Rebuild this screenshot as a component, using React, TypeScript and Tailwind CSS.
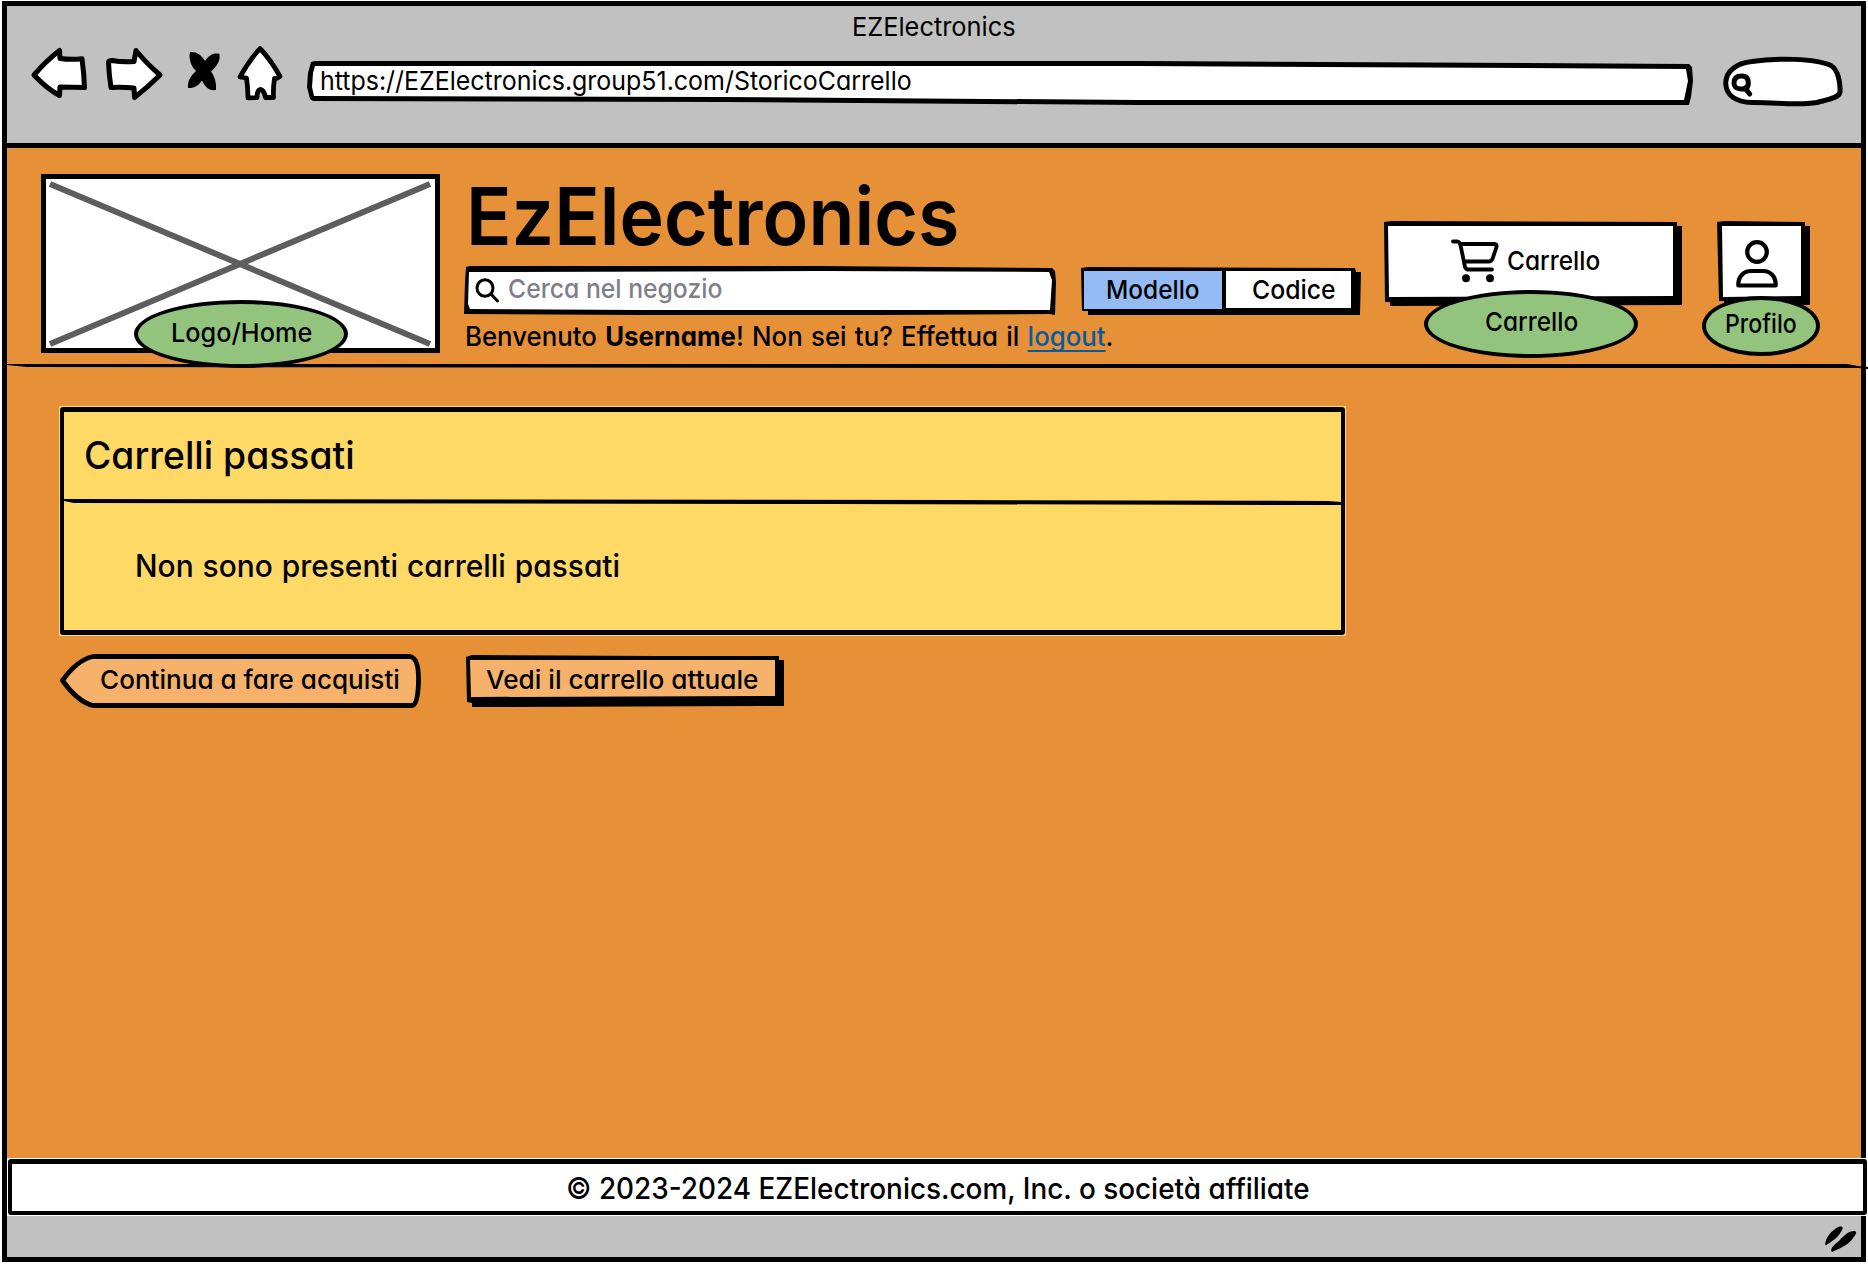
import { useLayoutEffect, useRef, useState } from "react";
import type { ReactNode } from "react";

/** One line of hand-lettered text, condensed or widened to fill its own width. */
function Line({ className, children }: { className: string; children: ReactNode }) {
  const box = useRef<HTMLSpanElement>(null);
  const text = useRef<HTMLSpanElement>(null);
  const [scale, setScale] = useState(1);
  useLayoutEffect(() => {
    if (box.current && text.current) {
      setScale(box.current.clientWidth / text.current.offsetWidth);
    }
  }, []);
  return (
    <span ref={box} className={`block shrink-0 ${className}`}>
      <span
        ref={text}
        className="inline-block origin-left whitespace-nowrap align-top"
        style={{ transform: `scaleX(${scale})` }}
      >
        {children}
      </span>
    </span>
  );
}

const ink = {
  fill: "white",
  stroke: "black",
  strokeWidth: 5,
  strokeLinejoin: "round" as const,
  strokeLinecap: "round" as const,
};

function BackIcon() {
  return (
    <svg className="h-[60px] w-[60px] shrink-0" viewBox="30 44 60 60" {...ink}>
      <path d="M34 75 Q46 61 59.500 50.500 L60 58.500 Q71 60 82 58.800 Q84 73 84.500 87.500 Q72 87 60 87 L59.500 95.500 Q46 88 34 75Z" />
    </svg>
  );
}

function ForwardIcon() {
  return (
    <svg className="h-[60px] w-[62px] shrink-0" viewBox="103 44 62 60" {...ink}>
      <path d="M108.500 62 Q109 60.500 112 60.500 Q123 62.500 134 61.500 Q135 56 136 50.500 Q146 63 160 75 Q148 87 134.500 97.500 L134 88 Q122 87 111 87.500 Q109 75 108.500 62Z" />
    </svg>
  );
}

function StopIcon() {
  return (
    <svg className="h-[60px] w-[38px] shrink-0" viewBox="185 44 38 60">
      <path d="M190 52 C197 51.500 201.500 55 205 61 C209 55 214 52.500 219.500 54 C220.500 61 217 66 211 71.500 C215 77 216.500 83 216 90 C209 91 205 87 202 80.500 C198.500 85.500 194 88.500 188 88 C187.500 81 190.500 76 196 71 C191 66 188.500 59 190 52Z" />
    </svg>
  );
}

function HomeIcon() {
  return (
    <svg className="h-[60px] w-[49px] shrink-0" viewBox="236 44 49 60" {...ink} strokeWidth={4.8}>
      <path d="M260 48.500 Q271 60 280 76.500 Q277 79 274.500 78.500 Q273 88 273.500 97.500 L265.500 97.500 Q264 90 260.500 89.500 Q257 90 257 97.500 L248 97.800 Q248 88 246.500 78 L240 77 Q248 62 260 48.500Z" />
    </svg>
  );
}

function BrowserSearch() {
  return (
    <svg className="ml-[27px] h-[66px] w-[123px] shrink-0" viewBox="1721 44 123 66" {...ink}>
      <path d="M1725.700 83 C1726 70 1738 63 1752 61.500 C1775 58 1815 58 1831 65.500 C1838 70 1840.500 82 1840 92 C1839 98 1828 99.500 1817 102.500 C1795 106 1775 102 1752 102.500 C1735 102 1726 95 1725.700 83Z" />
      <path fill="none" d="M1734 83 C1734 77 1738 76 1741.500 76 C1747 76 1748.500 79 1748.300 84 C1747.500 89 1745 89 1741 89 C1736 88.500 1734 87 1734 83Z M1745 88 L1749.700 94" />
    </svg>
  );
}

function CartIcon() {
  return (
    <svg
      className="h-[46px] w-[50px] shrink-0"
      viewBox="1450 240 50 46"
      fill="none"
      stroke="black"
      strokeWidth="3.800"
      strokeLinecap="round"
      strokeLinejoin="round"
    >
      <path d="M1453 243.500 H1457.500 Q1460 244 1460.500 247 L1465 269 Q1466 271.500 1468 271.500 H1492" />
      <path d="M1460 246 H1495 Q1497 246.500 1496.500 249 L1492.500 261 Q1491.500 263.500 1488.500 263.500 H1464.500" />
      <circle cx="1466" cy="280.300" r="4" fill="black" stroke="none" />
      <circle cx="1490" cy="280.300" r="4" fill="black" stroke="none" />
    </svg>
  );
}

function UserIcon() {
  return (
    <svg
      className="h-[50px] w-[44px]"
      viewBox="1735 238 44 50"
      fill="none"
      stroke="black"
      strokeWidth="4.200"
      strokeLinejoin="round"
    >
      <circle cx="1757" cy="251" r="9.800" />
      <path d="M1738.300 284.500 C1738 275 1744 270 1751 270 H1763 C1770 270 1776 275 1775.700 284.500Z" />
    </svg>
  );
}

function Badge({ className, children }: { className: string; children: ReactNode }) {
  return (
    <div
      className={`absolute flex items-center justify-center rounded-[50%] border-4 border-black bg-[#93c47d] ${className}`}
    >
      {children}
    </div>
  );
}

export default function App() {
  return (
    <div className="h-[1264px] w-[1868px] overflow-hidden bg-white pl-[2px] pt-px font-['Inter',sans-serif] text-[26px] leading-5 text-black [font-feature-settings:'cv11'] [font-weight:480]">
      <div className="flex h-[1261px] w-[1864px] flex-col border-[5px] border-black">
        <header className="h-[142px] shrink-0 border-b-[5px] border-black bg-[#c1c1c1]">
          <div className="flex justify-center pt-[11px]">
            <Line className="w-[164px] [font-weight:430]">EZElectronics</Line>
          </div>
          <nav className="flex items-start pl-[23px] pt-[7px]">
            <BackIcon />
            <div className="w-[13px]" />
            <ForwardIcon />
            <div className="w-5" />
            <StopIcon />
            <div className="w-[13px]" />
            <HomeIcon />
            <div className="ml-[22px] mt-[17px] h-[45px] w-[1387px] bg-black [clip-path:polygon(4px_1px,8px_0,60%_0,1382px_3px,1385px_6px,1386px_20px,1384px_36px,1382px_44px,60%_44px,30%_41px,6px_40px,3px_38px,0_26px,1px_12px)]">
              <div className="flex h-[45px] items-center bg-white pb-[5px] pl-[13px] [clip-path:polygon(8px_5px,60%_5px,1379px_8px,1381px_20px,1377px_39px,60%_39px,30%_36px,7px_35px,5px_26px,6px_12px)]">
                <Line className="w-[592px] [font-weight:430]">
                  https://EZElectronics.group51.com/StoricoCarrello
                </Line>
              </div>
            </div>
            <BrowserSearch />
          </nav>
        </header>

        <div className="flex h-[1010px] shrink-0 flex-col bg-[#e69138]">
          <section className="flex h-[216px] shrink-0 items-start pl-[34px] pt-px">
            <div className="relative mt-[25px] h-[179px] w-[399px] border-[5px] border-black bg-white">
              <svg className="h-[169px] w-[389px]" viewBox="46 179 389 169" stroke="#5d5d5f" strokeWidth="6">
                <path d="M50 184 L430 344 M430 184 L50 344" />
              </svg>
              <Badge className="left-[88px] top-[121px] h-[68px] w-[214px]">
                <Line className="w-[141px] pb-[3px]">Logo/Home</Line>
              </Badge>
            </div>

            <div className="ml-6 flex w-[898px] flex-col">
              <h1 className="mt-[32px] h-[70px] pl-[2px] text-[80px] leading-[70px] [font-weight:560]">
                <Line className="w-[493px]">EzElectronics</Line>
              </h1>
              <div className="mt-[15px] flex">
                <div className="h-[50px] w-[592px] bg-black [clip-path:polygon(2px_1px,6px_0,60%_0,588px_2px,591px_5px,592px_16px,591px_49px,586px_48px,70%_49px,30%_49px,0_48px,1px_16px)]">
                  <div className="flex h-[50px] items-center bg-white pl-[10px] [clip-path:polygon(5px_6px,60%_5px,585px_6px,588px_14px,586px_44px,70%_44px,30%_44px,6px_43px,4px_38px)]">
                    <svg className="h-[30px] w-[26px]" viewBox="475 277 26 30" fill="none" stroke="black" strokeWidth="3" strokeLinecap="round">
                      <ellipse cx="486" cy="289" rx="8" ry="8.300" />
                      <path d="M492 295 L498.500 302" />
                    </svg>
                    <Line className="ml-[8px] w-[214px] pb-[4px] text-[#7f7f8a]">Cerca nel negozio</Line>
                  </div>
                </div>
                <div className="ml-[24px] mt-px h-[50px] w-[282px] bg-black [clip-path:polygon(1px_1px,8px_0,275px_1px,276px_5px,281px_5px,280px_48px,8px_48px,8px_44px,2px_44px)]">
                  <div className="flex h-full pl-1 pt-1">
                    <div className="flex h-[38px] w-[138px] items-center justify-center bg-[#94bbf3]">
                      <Line className="w-[94px] pb-px">Modello</Line>
                    </div>
                    <div className="ml-1 flex h-[37px] w-[125px] items-center bg-white pl-[26px]">
                      <Line className="w-[84px]">Codice</Line>
                    </div>
                  </div>
                </div>
              </div>
              <p className="mt-[10px] pl-px text-[27px] leading-5 [word-spacing:1.500px]">
                <Line className="w-[648px]">
                  Benvenuto <b className="font-bold">Username</b>! Non sei tu? Effettua il{" "}
                  <a className="text-[#0c599c] underline decoration-2 underline-offset-[4px] [text-decoration-skip-ink:none]">logout</a>.
                </Line>
              </p>
            </div>

            <div className="relative ml-[22px] mt-[72px] h-[85px] w-[299px]">
              <div className="h-[85px] w-[298px] bg-black [clip-path:polygon(0_1px,8px_0,293px_1px,293px_5px,298px_5px,298px_84px,6px_85px,6px_81px,1px_81px)]">
                <div className="ml-[4px] flex h-[76px] w-[285px] items-center bg-white pl-[62px] pt-[4px] [clip-path:polygon(0_5px,285px_5px,285px_75px,1px_76px)]">
                  <CartIcon />
                  <Line className="ml-[7px] w-[93px]">Carrello</Line>
                </div>
              </div>
              <Badge className="left-[40px] top-[69px] h-[68px] w-[214px]">
                <Line className="w-[93px] pb-[4px]">Carrello</Line>
              </Badge>
            </div>

            <div className="relative ml-[34px] mt-[72px] h-[85px] w-[94px]">
              <div className="h-[85px] w-[94px] bg-black [clip-path:polygon(0_1px,8px_0,88px_1px,88px_5px,93px_5px,93px_84px,7px_84px,7px_80px,2px_80px)]">
                <div className="ml-[5px] flex h-[76px] w-[79px] justify-center bg-white pr-[9px] pt-[18px] [clip-path:polygon(0_5px,79px_5px,79px_75px,1px_76px)]">
                  <UserIcon />
                </div>
              </div>
              <Badge className="-left-[15px] top-[75px] h-[60px] w-[118px]">
                <Line className="w-[72px] pb-[4px]">Profilo</Line>
              </Badge>
            </div>
          </section>
          <div className="relative -mr-[7px] h-[5px] shrink-0 bg-black [clip-path:polygon(0_0,70%_0,1840px_0,1851px_2px,100%_3px,100%_5px,1851px_4px,60%_4px,20px_3px,0_1px)]" />

          <main className="pl-[52px] pt-[37px]">
            <section className="h-[230px] w-[1287px] bg-[#ffd966] pl-px pt-px">
              <div className="h-[228px] w-[1285px] rounded-[3px] border-x-4 border-y-[5px] border-black">
                <h2 className="h-[87px] pl-[20px] pt-[33px] text-[38px] leading-[20px]">
                  <Line className="w-[271px]">Carrelli passati</Line>
                </h2>
                <div className="h-[7px] bg-black [clip-path:polygon(0_0,70%_1px,99%_2px,100%_3px,100%_6px,99%_6px,60%_5px,10px_4px,0_2px)]" />
                <p className="pl-[71px] pt-[47px] text-[31px] leading-[26px] [word-spacing:1px]">
                  <Line className="w-[485px]">Non sono presenti carrelli passati</Line>
                </p>
              </div>
            </section>
            <div className="flex pt-[18px]">
              <button className="relative flex h-[54px] w-[363px] items-center pl-[40px]">
                <svg className="absolute inset-0 h-[54px] w-[363px]" viewBox="59 654 363 54" {...ink} fill="#f6b26b" strokeWidth={4.8}>
                  <path d="M93 656.500 H410 Q419 658 418.500 681 Q418 705.500 412 705.500 H93 Q78 702 62.500 680.500 Q77 660 93 656.500Z" />
                </svg>
                <span className="relative">
                  <Line className="w-[300px] pb-[3px]">Continua a fare acquisti</Line>
                </span>
              </button>
              <div className="ml-[44px] mt-px h-[53px] w-[318px] bg-black [clip-path:polygon(0_2px,6px_0,60%_1px,313px_1px,313px_5px,318px_5px,318px_51px,6px_52px,6px_48px,1px_47px)]">
                <div className="ml-1 flex h-[43px] w-[305px] items-center bg-[#f6b26b] pl-4 pt-[6px] [clip-path:polygon(0_5px,305px_5px,305px_41px,1px_42px)]">
                  <Line className="w-[273px]">Vedi il carrello attuale</Line>
                </div>
              </div>
            </div>
          </main>
        </div>

        <footer className="relative -mr-[6px] h-[58px] shrink-0 bg-white pl-px pt-px">
          <div className="flex h-[56px] w-[1859px] items-center justify-center rounded-[3px] border-4 border-t-[5px] border-black text-[29.500px]">
            <Line className="w-[744px]">© 2023-2024 EZElectronics.com, Inc. o società affiliate</Line>
          </div>
        </footer>
        <div className="flex grow justify-end bg-[#c1c1c1] pr-[3px] pt-[9px]">
          <svg className="h-7 w-[34px]" viewBox="1824 1225 34 28">
            <path d="M1825.500 1245.500 C1824 1240 1831 1230 1839.500 1226.500 C1843 1226 1843.500 1228 1841.500 1231 C1837 1239 1832 1241 1825.500 1245.500Z" />
            <path d="M1832 1252 C1829 1249 1835 1244 1839 1241 C1844 1235 1849 1231 1854 1231 C1858 1231.500 1856 1234 1852 1239.500 C1847 1246 1838 1249 1832 1252Z" />
          </svg>
        </div>
      </div>
    </div>
  );
}
